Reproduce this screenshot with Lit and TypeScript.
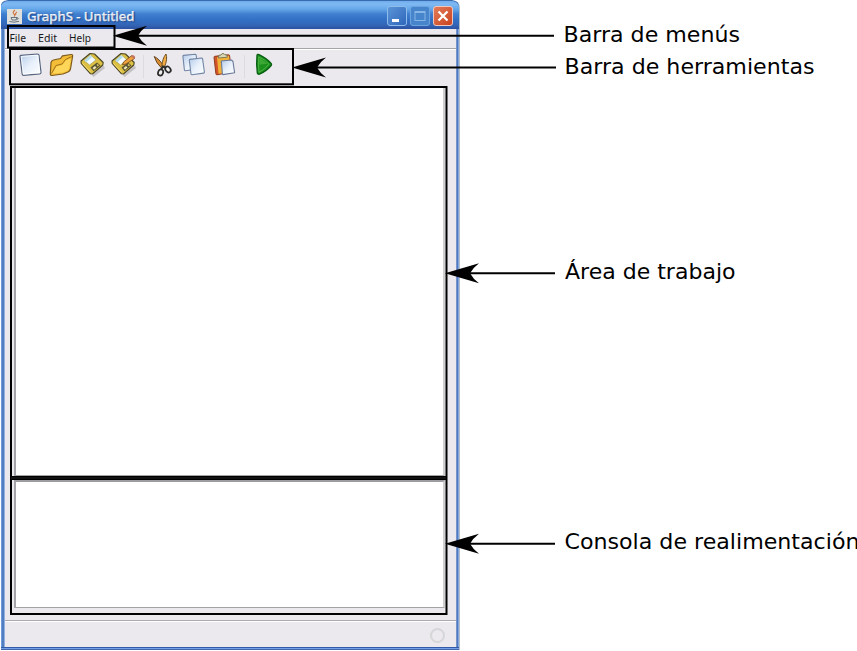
import { LitElement, html, css, svg } from "lit";
import { customElement } from "lit/decorators.js";

const paperFill = svg`<linearGradient id="p" x1="0" y1="0" x2="1" y2="1"><stop offset="0" stop-color="#b4cbea"/><stop offset=".5" stop-color="#e8f0fa"/><stop offset="1" stop-color="#fff"/></linearGradient>`;
const floppy = svg`
  <path d="M4 14 L13 23.500 L24.500 13.500 L26 16 L14.500 25 Z" fill="#777" opacity=".35"/>
  <path d="M2 9 L11 1.500 L15.500 2 L24.200 10.500 L23.800 13 L13.500 22 L11.500 21.800 L2.200 11.500 Z" fill="#dcc044" stroke="#4a4524" stroke-width="1.100" stroke-linejoin="round"/>
  <path d="M5 8.500 L11.300 2.800 L17 8 L10.500 13 Z" fill="#f4fbfc" stroke="#9c9650" stroke-width=".6"/>
  <path d="M5.500 8.500 L11.300 3.200 L13 5 L7.300 10.200 Z" fill="#b5deec"/>
  <path d="M11.500 15.500 L18 10.500 L21.500 13.500 L14.500 19.300 Z" fill="#5a5535"/>
  <path d="M13.500 16 L16 14 L17.500 15.500 L15 17.700 Z" fill="#efe7b5"/><path d="M17.500 13 L18.800 12 L20 13.200 L18.900 14.200Z" fill="#e4cf62"/>
  <path d="M3.500 11.500 L11.500 20" stroke="#f6df72" stroke-width="1"/>`;

const icons: Record<string, unknown> = {
  blank: svg`<defs>${paperFill}</defs><path d="M3.800 3.300 L20.500 2 Q21.800 2 22 3.200 L24 20.500 Q24 21.700 22.800 21.900 L6.500 23.300 Q5.300 23.300 5.200 22.100 L3 4.400 Q3 3.400 3.800 3.300Z" fill="url(#p)" stroke="#56647f" stroke-width="1.200"/><path d="M4.300 4.500 L20.800 3.200 L22.800 20.700 L6.300 22.100Z" fill="none" stroke="#fff" stroke-width=".8"/>`,
  open: svg`<path d="M3 10.500 Q3.500 8.500 5.500 8 L12.500 6.500 L14.500 3.800 L23 2.500 Q25 2.300 24.600 4.500 L22.500 17 Q22 19 20 20 L15 22 L4 23.500 Q2.200 23.500 2.300 21.500Z" fill="#f4bd37" stroke="#7d5c20" stroke-width="1.200" stroke-linejoin="round"/>
    <path d="M4.500 21.500 L8.500 14.500 L14.500 13 L18 8.500 L23 6.500 L21 17 Q20.500 18.500 15 20.500Z" fill="#fdd65a"/><path d="M3.500 21.500 L8 13.500 L14 12 L17.500 7.500 L23.800 4.500" fill="none" stroke="#9d711b" stroke-width="1"/>`,
  save: floppy,
  saveAs: svg`${floppy}<path d="M13.500 10 L22 3.500 L24.500 6.500 L16 12 L12.500 12.800Z" fill="#f0a440" stroke="#80501f" stroke-width=".9"/><path d="M21 4.300 L22.500 3 Q25 3 25.300 5.500 L23.900 6.800Z" fill="#c57462"/>`,
  cut: svg`<path d="M5.200 4.500 Q10 6.500 15.500 15 L13 16.500 Q7 11 5.200 4.500Z" fill="#dc8f31" stroke="#614526" stroke-width="1"/>
    <path d="M17 2 Q18.800 7 15.500 15 L12.800 14.500 Q13.500 6 17 2Z" fill="#f2ad45" stroke="#705026" stroke-width="1"/>
    <path d="M12 17.500 L14 14.500 L17 15.500" fill="none" stroke="#303030" stroke-width="2"/>
    <ellipse cx="11.600" cy="20.500" rx="2.500" ry="3.200" transform="rotate(18 11.600 20.500)" fill="#eee" stroke="#292929" stroke-width="1.700"/>
    <ellipse cx="19" cy="17.500" rx="2.400" ry="3.200" transform="rotate(-40 19 17.500)" fill="#eee" stroke="#292929" stroke-width="1.700"/>`,
  copy: svg`<defs>${paperFill}</defs><path d="M3.500 3.400 L15 2.200 Q16 2.200 16.100 3 L18 17 L5.300 18.700 Q4.500 18.700 4.400 18 L2.900 4.200 Q2.900 3.500 3.500 3.400Z" fill="url(#p)" stroke="#7185a5" stroke-width="1.100"/>
    <path d="M10 7.400 L21.500 6 Q22.400 6 22.600 6.900 L24.400 20 Q24.400 21 23.600 21.100 L12 22.800 Q11.100 22.800 11 22 L9.300 8.200 Q9.300 7.500 10 7.400Z" fill="url(#p)" stroke="#7185a5" stroke-width="1.100"/>`,
  paste: svg`<defs>${paperFill}</defs><path d="M3.800 4.300 L17.500 2.800 Q18.500 2.800 18.600 3.800 L20.500 20 L6 22.800 Q5 22.800 4.900 21.800 L3 5.300 Q3 4.500 3.800 4.300Z" fill="#d3542b" stroke="#8f3c22"/>
    <path d="M6 5.300 L18 3.800 L20 20 L7.500 21.800Z" fill="#f1b23a"/><path d="M7.500 6 L7.800 3.300 L10 3 L11 1.700 L13 1.700 L14 2.800 L16 3 L16.300 5.200Z" fill="#d9d8b4" stroke="#77714f" stroke-width=".9"/>
    <path d="M10.300 9 L20.500 8 L22 9.500 L23.600 20.800 L12 22.600 L11.400 22Z" fill="url(#p)" stroke="#6b7b98" stroke-width="1.100" stroke-linejoin="round"/>`,
  run: svg`<path d="M7 3.300 Q7.200 2 9 2.600 Q16.500 6 21.300 11.700 Q21.900 12.700 21.200 13.500 Q16 19.500 9.500 22.200 Q7.500 22.500 7.300 21 Q6.100 12 7 3.300Z" fill="#1c901d" stroke="#075f12" stroke-width="1.300"/>
    <path d="M8.700 4.800 Q15 7.500 19 12.300 Q14 18 9 20.300 Q8 12 8.700 4.800Z" fill="none" stroke="#53b84b" stroke-width=".9"/><path d="M9.300 6 Q14 8.500 17 12 Q12.500 11.500 9.300 13Z" fill="#4bb440" opacity=".7"/>`,
};

@customElement("tool-icon")
class ToolIcon extends LitElement {
  static properties = { name: {} };
  declare name: string;
  static styles = css`:host { display: block; width: 27px; height: 27px; } svg { display: block; width: 27px; height: 27px; }`;
  render() { return html`<svg viewBox="0 0 27 27">${icons[this.name]}</svg>`; }
}

const callouts = [
  { text: "Barra de menús", tip: 114, y: 35.8, end: 554, x: 563.5, base: 41.8, w: 176.5 },
  { text: "Barra de herramientas", tip: 293, y: 67.6, end: 556, x: 564.5, base: 74.4, w: 250 },
  { text: "Área de trabajo", tip: 446, y: 273.2, end: 555, x: 565, base: 278.8, w: 170.5 },
  { text: "Consola de realimentación", tip: 446, y: 543.8, end: 555, x: 564.5, base: 549, w: 295 },
];

@customElement("app-root")
class AppRoot extends LitElement {
  static styles = css`
    :host { display: block; position: relative; width: 857px; height: 651px; overflow: hidden; background: #fff; }
    * { box-sizing: border-box; }
    .window { width: 460px; height: 650px; display: flex; flex-direction: column; padding: 0 4px 3px 5px;
      background: linear-gradient(90deg, #fff 0 1px, #6d9bd9 1px 2px, #527dc0 2px 4px, #91afe0 4px 5px, #ebe9ed 5px 456px, #7694cb 456px 457px, #4e7ac2 457px 458px, #84a8dc 458px 459px, #b4bec9 459px);
      border-radius: 8px 8px 0 0; overflow: hidden; }
    .title { flex: 0 0 29px; margin: 0 -3px 0 -4px; padding: 3px 6px 0 6px; display: flex; align-items: center; border-radius: 7px 7px 0 0; border-top: 1px solid #386cae;
      background: linear-gradient(#6faced 0, #80b9f3 3px, #66a8e9 8px, #407fcf 13px, #3270c5 19px, #3465b5 24px, #2b51a2 28px); }
    .java { width: 15px; height: 15px; margin-right: 5px; }
    .name { flex: 1; font: 500 13px "Noto Sans", sans-serif; text-shadow: 1px 1px 1px #244a8b; }
    .name svg, .menus svg { display: block; overflow: visible; }
    .controls { display: flex; gap: 3px; }
    .control { width: 20px; height: 20px; margin-top: -1px; border: 1px solid #8ebceb; border-radius: 3px; background: linear-gradient(135deg, #5b95d6, #2e66bb); }
    .control.off { background: #4684cc; border-color: #6da4df; }
    .control.close { border-color: #f1c6bd; background: linear-gradient(135deg, #e27b59, #cb4320); }
    .control svg { display: block; width: 18px; height: 18px; }
    .menus { flex: 0 0 20px; display: flex; padding: 0 0 0 5px; border-bottom: 1px solid #a5a5a8; }
    .tools { flex: 0 0 38px; display: flex; align-items: flex-start; gap: 4px; padding: 2px 0 0 12px; border-top: 1px solid #fff; }
    .divider { width: 1px; height: 23px; margin: 3px 1px 0 2px; background: #dcdbe0; }
    .pane { margin: 0 11px 0 9px; background: #fff; border: solid; border-width: 1px 2px 1px 2px; border-color: #9d9da1 #cfcfcf #a4a4a6 #a5a5a9; }
    .work { flex: 0 0 389px; }
    .console { flex: 0 0 128px; margin-top: 4px; border-top-width: 2px; }
    .status { flex: 1; margin-top: 12px; border-top: 1px solid #aaaab0; box-shadow: inset 0 1px #fff; display: flex; justify-content: flex-end; padding: 7px 11px 0 0; }
    .idle { width: 15px; height: 15px; border: 2px solid #d6d6d9; border-radius: 50%; }
    .bottom { height: 3px; margin: 0 -3px -3px -4px; flex: 0 0 3px; background: linear-gradient(#315ba8 0 1px, #779fe6 1px 2px, #4166a9 2px); }
    .notes { position: absolute; left: 0; top: 0; width: 857px; height: 651px; overflow: visible; font: 21.500px "DejaVu Sans", sans-serif; }
  `;
  render() {
    return html`
      <div class="window">
        <header class="title">
          <svg class="java" viewBox="0 0 15 15"><rect width="15" height="15" fill="#dfdfdc"/><path d="M8 1 Q5 3.500 7 5 Q8.500 6.200 7 7.500 M10 3 Q7.800 4.500 9 6" fill="none" stroke="#d37845" stroke-width="1.200"/><path d="M4 8.500 H10 L9 11 H5Z M10 9 Q13 8.500 9.500 11 M2.500 12.500 Q7 14 12 12.300" fill="none" stroke="#65727f"/></svg>
          <div class="name"><svg width="110" height="18"><text x="0" y="12.800" fill="#fff" stroke="#fff" stroke-width=".25" textLength="107.500" lengthAdjust="spacingAndGlyphs">GraphS - Untitled</text></svg></div>
          <div class="controls">
            <div class="control"><svg viewBox="0 0 18 18"><path d="M4 13.500 H11" stroke="#fff" stroke-width="3"/></svg></div>
            <div class="control off"><svg viewBox="0 0 18 18"><rect x="4" y="4.500" width="10" height="9" fill="none" stroke="#86b6e6"/><path d="M4 5 H14" stroke="#86b6e6" stroke-width="2"/></svg></div>
            <div class="control close"><svg viewBox="0 0 18 18"><path d="M4.500 4.500 L13.500 13.500 M13.500 4.500 L4.500 13.500" stroke="#fff" stroke-width="2.300"/></svg></div>
          </div>
        </header>
        <nav class="menus"><svg width="95" height="19" font-family="Noto Sans, sans-serif" font-size="11" fill="#18181c">
          <text x="-0.500" y="12.800" textLength="16.500" lengthAdjust="spacingAndGlyphs">File</text><text x="28" y="12.800" textLength="19" lengthAdjust="spacingAndGlyphs">Edit</text><text x="59" y="12.800" textLength="22" lengthAdjust="spacingAndGlyphs">Help</text>
        </svg></nav>
        <div class="tools">
          ${["blank", "open", "save", "saveAs"].map((n) => html`<tool-icon name=${n}></tool-icon>`)}
          <div class="divider"></div>
          ${["cut", "copy", "paste"].map((n) => html`<tool-icon name=${n}></tool-icon>`)}
          <div class="divider"></div>
          <tool-icon name="run"></tool-icon>
        </div>
        <div class="pane work"></div>
        <div class="pane console"></div>
        <footer class="status"><div class="idle"></div></footer>
        <div class="bottom"></div>
      </div>
      <svg class="notes" viewBox="0 0 857 651">
        <g fill="none" stroke="#000" stroke-width="2">
          <rect x="8" y="26" width="106.500" height="21.500"/>
          <rect x="10" y="49" width="283" height="35.300"/>
          <rect x="11" y="87" width="435.500" height="390"/>
          <rect x="11" y="479" width="435.500" height="135"/>
          <path d="M11 478 H446" stroke="#222" stroke-width="1"/>
        </g>
        ${callouts.map((c) => svg`
          <path d="M${c.tip + 23} ${c.y} H${c.end}" stroke="#000" stroke-width="2"/>
          <path d="M${c.tip - 1} ${c.y} L${c.tip + 33} ${c.y - 10} Q${c.tip + 27} ${c.y - 5.5} ${c.tip + 24} ${c.y} Q${c.tip + 27} ${c.y + 5.5} ${c.tip + 33} ${c.y + 10}Z"/>
          <text x=${c.x} y=${c.base} textLength=${c.w} lengthAdjust="spacingAndGlyphs">${c.text}</text>`)}
      </svg>`;
  }
}
